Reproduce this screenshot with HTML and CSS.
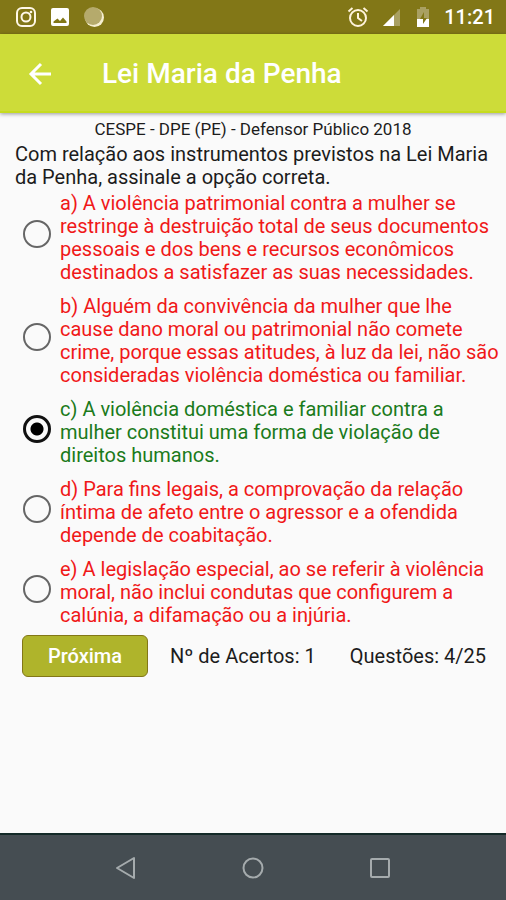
FILE: index.html
```html
<!DOCTYPE html>
<html lang="pt-BR">
<head>
  <meta charset="UTF-8">
  <meta name="viewport" content="width=device-width, initial-scale=1">
  <title>Lei Maria da Penha</title>
  <link rel="stylesheet" href="styles.css">
</head>
<body>
  <div class="status">
    <svg width="22" height="22" viewBox="0 0 22 22" fill="none" stroke="#fff8e8" stroke-width="2">
      <rect x="2" y="2" width="18" height="18" rx="5"/>
      <circle cx="11" cy="11" r="4.5"/>
      <circle cx="16" cy="6" r="1.300" fill="#fff8e8" stroke="none"/>
    </svg>
    <svg width="22" height="22" viewBox="0 0 22 22">
      <path fill="#fff" fill-rule="evenodd" d="M4 2h14a2 2 0 0 1 2 2v14a2 2 0 0 1-2 2H4a2 2 0 0 1-2-2V4a2 2 0 0 1 2-2zM4.500 17h13v-1.500l-3.500-4-3 3.500-2.500-2.500-4 3z"/>
    </svg>
    <svg width="22" height="22" viewBox="0 0 22 22">
      <circle cx="11.500" cy="11.500" r="9.500" fill="#f6efd0"/>
      <circle cx="10" cy="10" r="9" fill="#b5aa6c"/>
    </svg>
    <div class="status-right">
      <svg width="22" height="22" viewBox="0 0 22 22" fill="none" stroke="#fff3dc" stroke-width="2">
        <circle cx="11" cy="12" r="8"/>
        <path d="M11 7v5l4 3M1.500 5.500l4-3.500M20.500 5.500l-4-3.500"/>
      </svg>
      <svg width="20" height="22" viewBox="0 0 20 22">
        <path fill="#a9a062" d="M18 3v17H1z"/>
        <path fill="#fff" d="M12 9v11H1z"/>
      </svg>
      <svg width="16" height="22" viewBox="0 0 16 22">
        <path fill="#a9a062" d="M5 1h6v2h3v10H2V3h3z"/>
        <path fill="#fff" d="M2 13h12v8H2z"/>
        <path fill="#827717" d="M9 6l-4 7h3v5l4-6H9z"/>
      </svg>
      <span class="clock">11:21</span>
    </div>
  </div>

  <header>
    <button class="back" aria-label="Voltar">
      <svg width="24" height="24" viewBox="0 0 24 24" fill="none" stroke="#fff" stroke-width="3">
        <path d="M23 12H3M13 2L3 12l10 10"/>
      </svg>
    </button>
    <h1>Lei Maria da Penha</h1>
  </header>

  <main>
    <p class="prova">CESPE - DPE (PE) - Defensor Público 2018</p>
    <p class="pergunta" id="pergunta">Com relação aos instrumentos previstos na Lei Maria<br>da Penha, assinale a opção correta.</p>

    <div class="opcoes" role="radiogroup" aria-labelledby="pergunta">
      <label class="opcao errada">
        <input type="radio" name="resposta" value="a">
        <span>a) A violência patrimonial contra a mulher se<br>restringe à destruição total de seus documentos<br>pessoais e dos bens e recursos econômicos<br>destinados a satisfazer as suas necessidades.</span>
      </label>
      <label class="opcao errada">
        <input type="radio" name="resposta" value="b">
        <span>b) Alguém da convivência da mulher que lhe<br>cause dano moral ou patrimonial não comete<br>crime, porque essas atitudes, à luz da lei, não são<br>consideradas violência doméstica ou familiar.</span>
      </label>
      <label class="opcao certa">
        <input type="radio" name="resposta" value="c" checked>
        <span>c) A violência doméstica e familiar contra a<br>mulher constitui uma forma de violação de<br>direitos humanos.</span>
      </label>
      <label class="opcao errada">
        <input type="radio" name="resposta" value="d">
        <span>d) Para fins legais, a comprovação da relação<br>íntima de afeto entre o agressor e a ofendida<br>depende de coabitação.</span>
      </label>
      <label class="opcao errada">
        <input type="radio" name="resposta" value="e">
        <span>e) A legislação especial, ao se referir à violência<br>moral, não inclui condutas que configurem a<br>calúnia, a difamação ou a injúria.</span>
      </label>
    </div>

    <div class="rodape">
      <button class="proxima">Próxima</button>
      <span>Nº de Acertos: 1</span>
      <span class="questoes">Questões: 4/25</span>
    </div>
  </main>

  <nav>
    <button aria-label="Voltar">
      <svg width="24" height="24" viewBox="0 0 24 24"><path d="M20 2v20L3 12z"/></svg>
    </button>
    <button aria-label="Início">
      <svg width="24" height="24" viewBox="0 0 24 24"><circle cx="12" cy="12" r="9.500"/></svg>
    </button>
    <button aria-label="Recentes">
      <svg width="24" height="24" viewBox="0 0 24 24"><rect x="3" y="3" width="18" height="18" rx="1"/></svg>
    </button>
  </nav>
</body>
</html>
```

FILE: styles.css
```css
* {
  box-sizing: border-box;
}

body {
  font-family: Roboto, sans-serif;
  margin: 0;
  min-height: 100vh;
  background-color: #fafafa;
  color: #1c1c1c;
  display: flex;
  flex-direction: column;
}

button {
  font-family: inherit;
  border: none;
  background: none;
  padding: 0;
  cursor: pointer;
}

svg {
  display: block;
}

.status {
  height: 34px;
  background-color: #827717;
  color: white;
  padding: 0 11px 0 15px;
  display: flex;
  align-items: center;
  gap: 12px;
}

.status-right {
  margin-left: auto;
  display: flex;
  align-items: center;
  gap: 13px;
}

.clock {
  font-size: 20px;
  font-weight: 500;
}

header {
  height: 79px;
  background-color: #cddc39;
  border-bottom: 2px solid #c6dc1e;
  box-shadow: 0 1px 4px rgba(0, 0, 0, 0.4);
  padding: 2px 28px 0;
  display: flex;
  align-items: center;
  gap: 50px;
}

h1 {
  color: white;
  font-size: 28px;
  font-weight: 500;
  margin: 0;
}

main {
  flex: 1;
  padding: 5px 15px 16px;
  font-size: 20px;
  line-height: 23px;
}

.prova {
  font-size: 17px;
  text-align: center;
  margin: 0 0 2px;
}

.pergunta {
  margin: 0 0 3px;
}

.opcoes {
  display: flex;
  flex-direction: column;
  gap: 3px;
}

.opcao {
  display: flex;
  align-items: center;
  gap: 9px;
  padding: 0 0 8px 8px;
  margin-right: -15px;
  cursor: pointer;
}

.opcao input {
  appearance: none;
  flex: none;
  width: 28px;
  height: 28px;
  margin: 0 0 8px;
  border: 2px solid #666;
  border-radius: 50%;
}

.opcao input:checked {
  border: 3px solid #111;
  background: radial-gradient(circle, #000 6px, transparent 7px);
}

.errada {
  color: #f01818;
}

.certa {
  color: #1b7a1b;
}

.rodape {
  display: flex;
  align-items: center;
  padding: 0 5px 0 7px;
}

.proxima {
  width: 126px;
  height: 42px;
  margin-right: 22px;
  background-color: #afb42b;
  border: 1px solid #827717;
  border-radius: 6px;
  color: white;
  font-size: 20px;
  font-weight: 500;
}

.questoes {
  margin-left: auto;
}

nav {
  height: 67px;
  background-color: #454d52;
  border-top: 2px solid #142a28;
  padding: 0 63px;
  display: flex;
  align-items: center;
  justify-content: space-around;
}

nav svg {
  fill: none;
  stroke: #a5abad;
  stroke-width: 2;
  stroke-linejoin: round;
}
```
